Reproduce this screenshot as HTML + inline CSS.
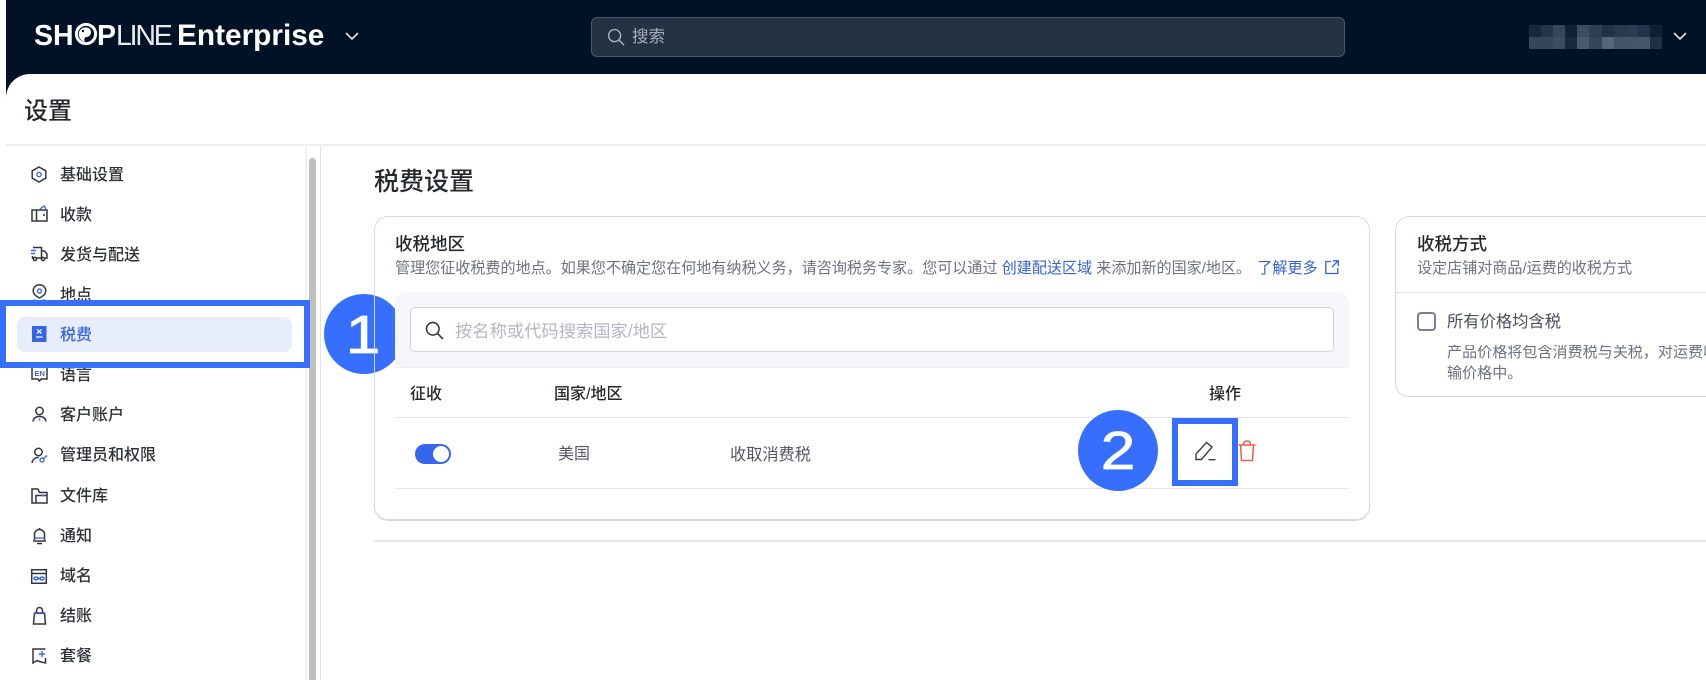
<!DOCTYPE html>
<html lang="zh">
<head>
<meta charset="utf-8">
<style>
html,body{margin:0;padding:0;background:#fff}
body{width:1706px;height:680px;overflow:hidden;position:relative;font-family:"Liberation Sans","Noto Sans CJK SC",sans-serif;color:#2a2d35}
.a{position:absolute}
.t{position:absolute;white-space:nowrap;line-height:1}
.nav{font-size:16px;left:60px;color:#2e3138;font-weight:500}
.h{font-size:16px;color:#26282e;font-weight:500}
.d{font-size:15.07px;color:#6d7183}
svg{position:absolute;overflow:visible;fill:none}
.line{position:absolute;height:1px;background:#e4e5ec}
.ic{stroke:#33363f;stroke-width:1.5}
.bl{stroke:#3a6ae0;stroke-width:1.4}
.logo{color:#fff;font-weight:700;font-size:28.5px;top:22px}
.num{position:absolute;line-height:1;font-size:54px;color:#fff;width:42px;text-align:center;-webkit-text-stroke:.8px #fff;font-family:"Liberation Sans",sans-serif;transform:scaleX(1.15)}
</style>
</head>
<body>
<!-- top bar -->
<div class="a" style="left:6px;top:0;width:1700px;height:74px;background:#011227"></div>
<div class="a" style="left:6px;top:74px;width:24px;height:24px;background:#011227"></div>
<div class="a" style="left:6px;top:74px;width:24px;height:24px;background:#fff;border-top-left-radius:24px"></div>

<div class="t logo" style="left:34px">SH</div>
<svg style="left:75px;top:23px" width="22" height="22" viewBox="0 0 22 22"><circle cx="11" cy="11" r="9.6" stroke="#fff" stroke-width="3"/><path d="M4 9c2-5 8-6 11-3 2 3 1 7-3 8-3 0-3 3-2 5-4-1-7-5-6-10z" fill="#fff"/><circle cx="8" cy="8" r="1.2" fill="#011227"/></svg>
<div class="t logo" style="left:97px">P</div>
<div class="t logo" style="left:116px;font-weight:400;letter-spacing:-2.2px;opacity:.92">LINE</div>
<div class="t logo" style="left:177px;font-size:29.8px;top:20.5px">Enterprise</div>
<svg style="left:345px;top:32px" width="14" height="8" viewBox="0 0 14 8"><path d="M1 1l6 6 6-6" stroke="#fff" stroke-width="1.5"/></svg>

<div class="a" style="left:591px;top:17px;width:752px;height:38px;background:#233344;border:1px solid #4b5a6b;border-radius:6px"></div>
<svg style="left:607px;top:28px" width="18" height="18" viewBox="0 0 18 18"><circle cx="7.6" cy="7.6" r="6" stroke="#aab2bd" stroke-width="1.4"/><path d="M12 12l5 5" stroke="#aab2bd" stroke-width="1.4"/></svg>
<div class="t" style="left:632px;top:29px;font-size:16.5px;color:#a5adb8">搜索</div>

<!-- mosaic -->
<div class="a" style="left:1529px;top:25px;width:133px;height:24px;display:grid;grid-template-columns:repeat(11,12.1px);grid-template-rows:12px 12px">
<i style="background:#16283c"></i><i style="background:#22364a"></i><i style="background:#33475a"></i><i style="background:#0f2236"></i><i style="background:#3a4d60"></i><i style="background:#2d4154"></i><i style="background:#1e3145"></i><i style="background:#27394d"></i><i style="background:#2a3d50"></i><i style="background:#20334a"></i><i style="background:#0f2035"></i>
<i style="background:#33465a"></i><i style="background:#33465a"></i><i style="background:#3a4d60"></i><i style="background:#17293d"></i><i style="background:#485a6c"></i><i style="background:#33475a"></i><i style="background:#566779"></i><i style="background:#41546a"></i><i style="background:#42556a"></i><i style="background:#44566a"></i><i style="background:#1e3045"></i>
</div>
<svg style="left:1673px;top:32px" width="14" height="8" viewBox="0 0 14 8"><path d="M1 1l6 6 6-6" stroke="#fff" stroke-width="1.5"/></svg>

<!-- page header -->
<div class="t" style="left:24px;top:100px;font-size:24px;color:#26282e;font-weight:500">设置</div>
<div class="a" style="left:6px;top:144px;width:1700px;height:2px;background:#eeeff2"></div>
<div class="a" style="left:320px;top:145px;width:1px;height:535px;background:#e2e3e8"></div>
<div class="a" style="left:305px;top:146px;width:2px;height:534px;background:#f1f1f3"></div>
<div class="a" style="left:309px;top:158px;width:7px;height:522px;background:#bfbfbf;border-radius:4px 4px 0 0"></div>

<!-- nav -->
<div class="t nav" style="top:168px">基础设置</div>
<svg style="left:31px;top:166px" width="16" height="17" viewBox="0 0 16 17"><path class="ic" d="M8 1l6.800 3.800v7.400L8 16l-6.800-3.800V4.800z"/><circle cx="8" cy="8.500" r="2.200" class="bl" stroke-width="1.800"/></svg>
<div class="t nav" style="top:208px">收款</div>
<svg style="left:31px;top:204px" width="17" height="18" viewBox="0 0 17 18"><path class="ic" d="M1 6h15v11H1zM5.500 6v11"/><path class="bl" d="M9 5l4-3 2 3"/><circle cx="13" cy="11" r="1" fill="#33363f"/></svg>
<div class="t nav" style="top:248px">发货与配送</div>
<svg style="left:31px;top:246px" width="17" height="16" viewBox="0 0 17 16"><path class="ic" d="M2 1.500h8.500v10M10.500 5h3l2.500 3v4h-2M5.500 12h5M2.500 12h-1V10"/><circle cx="4" cy="13" r="1.600" class="ic"/><circle cx="12" cy="13" r="1.600" class="ic"/><path class="bl" d="M0 4.500h5M0 7.500h4"/></svg>
<div class="t nav" style="top:288px">地点</div>
<svg style="left:32px;top:285px" width="15" height="17" viewBox="0 0 15 17"><path class="ic" d="M7.500 13C3.500 11 1.200 8.500 1.200 6a6.300 6.300 0 0 1 12.600 0c0 2.500-2.300 5-6.300 7zM3 14.500l-1 2M12 14.500l1 2"/><circle cx="7.500" cy="6" r="2" class="bl"/></svg>

<div class="a" style="left:17px;top:316.500px;width:275px;height:35px;border-radius:8px;background:#e8edfc"></div>
<div class="t nav" style="top:328px;color:#3566dd">税费</div>
<svg style="left:32px;top:326px" width="15" height="16" viewBox="0 0 15 16"><path d="M0 0h14.500v16H0z" fill="#3566e6"/><path d="M5 3.500l4.500 4M9.500 3.500L5 7.500M4 11h6.500" stroke="#fff" stroke-width="1.200"/></svg>

<div class="t nav" style="top:368px">语言</div>
<svg style="left:31px;top:365px" width="17" height="18" viewBox="0 0 17 18"><path class="ic" d="M1 1h15v13h-6l-1.500 2L7 14H1z"/><text x="3.500" y="11" font-family="Liberation Sans" font-size="7.500" font-weight="700" fill="#3a6ae0">EN</text></svg>
<div class="t nav" style="top:408px">客户账户</div>
<svg style="left:32px;top:406px" width="15" height="17" viewBox="0 0 15 17"><circle cx="7.500" cy="5" r="3.700" class="ic"/><path class="ic" d="M1 15.500c.5-3.500 3-5 6.500-5s6 1.500 6.500 5"/><path class="bl" d="M7.500 12.500v2"/></svg>
<div class="t nav" style="top:448px">管理员和权限</div>
<svg style="left:31px;top:447px" width="17" height="17" viewBox="0 0 17 17"><circle cx="7.500" cy="5" r="3.700" class="ic"/><path class="ic" d="M1 16c.4-3.500 3-5.500 6.500-5.500"/><circle cx="11" cy="13" r="2" class="bl"/><path class="bl" d="M12.500 11.500l3.500-3"/></svg>
<div class="t nav" style="top:489px">文件库</div>
<svg style="left:31px;top:488px" width="17" height="16" viewBox="0 0 17 16"><path class="ic" d="M1 15V1h6l1.500 3.500H16V15zM5 15V7.500h11"/><path class="bl" d="M10.500 7.500h3"/></svg>
<div class="t nav" style="top:529px">通知</div>
<svg style="left:32px;top:527px" width="15" height="18" viewBox="0 0 15 18"><path class="ic" d="M2.500 13V7.500a5 5 0 0 1 10 0V13M1 14h13M7.500 1v1.500M5 16.500h5"/><path class="bl" d="M2.500 11h10"/></svg>
<div class="t nav" style="top:569px">域名</div>
<svg style="left:31px;top:569px" width="16" height="15" viewBox="0 0 16 15"><path class="ic" d="M.7.700h14.600v13.600H.7zM.7 4.500h14.600"/><path class="bl" stroke-width="1" d="M7 9c-.5-1-4-1.500-4 .5s3.500 1.500 4 .5M9 9c.5-1 4-1.500 4 .5s-3.500 1.500-4 .5M6 9.500h4"/></svg>
<div class="t nav" style="top:609px">结账</div>
<svg style="left:32px;top:607px" width="15" height="18" viewBox="0 0 15 18"><path class="ic" d="M2.500 6h10l1 11h-12zM4.500 6V3.500a3 3 0 0 1 6 0V6"/><path class="bl" d="M2 6.500h11"/></svg>
<div class="t nav" style="top:649px">套餐</div>
<svg style="left:32px;top:648px" width="15" height="16" viewBox="0 0 15 16"><path class="ic" d="M13.500 1H1v14l4-2.500 4 1.500 4.500 1V10"/><path class="bl" d="M10 3v6M7 6h6"/></svg>

<!-- blue annotation 1 -->
<div class="a" style="left:0;top:300px;width:298px;height:56px;border:6px solid #366eff"></div>
<div class="a" style="left:324px;top:294px;width:80px;height:80px;border-radius:50%;background:#366eff"></div>
<div class="num" style="left:342px;top:308px">1</div>

<!-- main -->
<div class="t" style="left:374px;top:170px;font-size:25px;color:#26282e;font-weight:500">税费设置</div>

<div class="a" style="left:374px;top:216px;width:996px;height:305px;box-sizing:border-box;border:1px solid #d8d9e3;border-radius:14px;border-bottom-width:2px"></div>
<div class="t h" style="left:395px;top:236px;font-size:17.5px">收税地区</div>
<div class="t d" style="left:395px;top:261px">管理您征收税费的地点。如果您不确定您在何地有纳税义务，请咨询税务专家。您可以通过 <span style="color:#3162d8">创建配送区域</span> 来添加新的国家/地区。 <span style="color:#3162d8;margin-left:2px">了解更多</span></div>
<svg style="left:1325px;top:260px" width="14" height="14" viewBox="0 0 14 14"><path d="M6 1.500H.8v12h12V8M8 .8h5.300V6M13 1L7 7" stroke="#3162d8" stroke-width="1.300"/></svg>

<div class="a" style="left:395px;top:292px;width:954px;height:76px;background:#f5f6fa;border-radius:12px 12px 0 0;border-bottom:1px solid #eceef3;box-sizing:border-box"></div>
<div class="a" style="left:410px;top:307px;width:924px;height:45px;box-sizing:border-box;background:#fff;border:1px solid #d3d5e0;border-radius:5px"></div>
<svg style="left:425px;top:321px" width="19" height="19" viewBox="0 0 19 19"><circle cx="7.800" cy="7.800" r="6.300" stroke="#2c2f38" stroke-width="1.500"/><path d="M12.500 12.500l5.500 5.500" stroke="#2c2f38" stroke-width="1.500"/></svg>
<div class="t" style="left:455px;top:322.500px;font-size:17.3px;color:#b3b6c4">按名称或代码搜索国家/地区</div>

<div class="t h" style="left:410px;top:386.500px">征收</div>
<div class="t h" style="left:554px;top:386.500px">国家/地区</div>
<div class="t h" style="left:1209px;top:386.500px">操作</div>
<div class="line" style="left:395px;top:417px;width:954px"></div>

<div class="a" style="left:415px;top:444px;width:36px;height:20px;border-radius:10px;background:#3566ee"></div>
<div class="a" style="left:433px;top:446px;width:16px;height:16px;border-radius:50%;background:#fff"></div>
<div class="t" style="left:558px;top:447px;font-size:16px;color:#54576a">美国</div>
<div class="t" style="left:730px;top:447px;font-size:16.2px;color:#54576a">收取消费税</div>
<div class="line" style="left:395px;top:488px;width:954px"></div>

<!-- annotation 2 -->
<div class="a" style="left:1078px;top:410px;width:80px;height:81px;border-radius:50%;background:#366eff"></div>
<div class="num" style="left:1097px;top:424px">2</div>
<div class="a" style="left:1172px;top:418px;width:54px;height:56px;border:6px solid #366eff;background:#fff"></div>
<svg style="left:1195px;top:441px" width="21" height="20" viewBox="0 0 21 20"><path d="M1 18.500v-5.500L11.500 1.500l5.500 4.500L6.500 18.500zM13.500 18.700h7" stroke="#3a3d46" stroke-width="1.400"/></svg>
<svg style="left:1238px;top:440px" width="18" height="22" viewBox="0 0 18 22"><path d="M.5 5h17M2.500 5l1 15.500h11l1-15.500M5.500 5C5.500 2 7 1 9 1s3.500 1 3.500 4" stroke="#e7604a" stroke-width="1.500"/></svg>

<div class="a" style="left:374px;top:540px;width:1332px;height:2px;background:#e6e7ea"></div>

<!-- card 2 -->
<div class="a" style="left:1395px;top:216px;width:311px;height:181px;box-sizing:border-box;border:1px solid #d8d9e3;border-right:0;border-radius:14px 0 0 14px"></div>
<div class="t h" style="left:1417px;top:236px;font-size:17.5px">收税方式</div>
<div class="t d" style="left:1417px;top:261px">设定店铺对商品/运费的收税方式</div>
<div class="line" style="left:1396px;top:292px;width:310px"></div>
<div class="a" style="left:1417px;top:312px;width:19px;height:19px;box-sizing:border-box;border:2px solid #7b7e9b;border-radius:4px"></div>
<div class="t" style="left:1447px;top:314px;font-size:16.3px;color:#4b4e5c">所有价格均含税</div>
<div class="t d" style="left:1447px;top:345px;width:259px;overflow:hidden">产品价格将包含消费税与关税，对运费收取的税费也包含在运</div>
<div class="t d" style="left:1447px;top:366px">输价格中。</div>
</body>
</html>
